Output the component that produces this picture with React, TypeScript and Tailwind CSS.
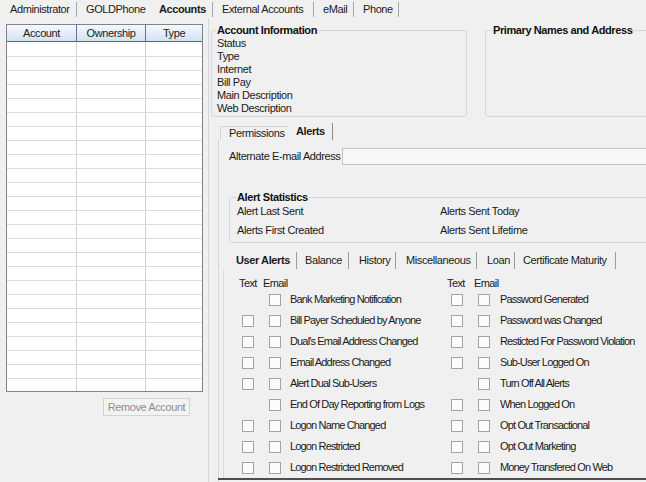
import React from 'react';

type AlertRow = { text: boolean; label: string };

const leftAlerts: AlertRow[] = [
  { text: false, label: 'Bank Marketing Notification' },
  { text: true, label: 'Bill Payer Scheduled by Anyone' },
  { text: true, label: "Dual's Email Address Changed" },
  { text: true, label: 'Email Address Changed' },
  { text: true, label: 'Alert Dual Sub-Users' },
  { text: false, label: 'End Of Day Reporting from Logs' },
  { text: true, label: 'Logon Name Changed' },
  { text: true, label: 'Logon Restricted' },
  { text: true, label: 'Logon Restricted Removed' },
];

const rightAlerts: AlertRow[] = [
  { text: true, label: 'Password Generated' },
  { text: true, label: 'Password was Changed' },
  { text: true, label: 'Resticted For Password Violation' },
  { text: true, label: 'Sub-User Logged On' },
  { text: false, label: 'Turn Off All Alerts' },
  { text: true, label: 'When Logged On' },
  { text: true, label: 'Opt Out Transactional' },
  { text: true, label: 'Opt Out Marketing' },
  { text: true, label: 'Money Transfered On Web' },
];

const Box = () => <span className="block w-[12px] h-[12px] shrink-0 border border-[#a3a3a3] bg-[#fbfbfb]" />;

const AlertColumn: React.FC<{ rows: AlertRow[]; textOffset: string; emailWidth: string; labelGap: string }> = ({ rows, textOffset, emailWidth, labelGap }) => (
  <div className="flex flex-col">
    <div className="flex h-[12px] leading-[12px] tracking-[-0.6px]">
      <span className={textOffset + ' ' + emailWidth}>Text</span>
      <span>Email</span>
    </div>
    {rows.map((r) => (
      <div key={r.label} className="flex items-center h-[21px]">
        {r.text ? <Box /> : <span className="block w-[12px] shrink-0" />}
        <span className="ml-[15px]"><Box /></span>
        <span className={labelGap + ' whitespace-nowrap tracking-[-0.85px]'}>{r.label}</span>
      </div>
    ))}
  </div>
);

const topTabs = [
  { label: 'Administrator', w: 'w-[77px]', pl: 'pl-[10px]', sep: true },
  { label: 'GOLDPhone', w: 'w-[73px]', pl: 'pl-[9px]', sep: false },
  { label: 'Accounts', w: 'w-[63px]', pl: 'pl-[9px]', sep: true, bold: true },
  { label: 'External Accounts', w: 'w-[101px]', pl: 'pl-[9px]', sep: true },
  { label: 'eMail', w: 'w-[40px]', pl: 'pl-[9px]', sep: true },
  { label: 'Phone', w: 'w-[45px]', pl: 'pl-[9px]', sep: true },
];

const alertTabs = [
  { label: 'User Alerts', w: 'w-[69px]', pl: 'pl-[8px]', bold: true },
  { label: 'Balance', w: 'w-[52px]', pl: 'pl-[8px]' },
  { label: 'History', w: 'w-[47px]', pl: 'pl-[10px]' },
  { label: 'Miscellaneous', w: 'w-[81px]', pl: 'pl-[10px]' },
  { label: 'Loan', w: 'w-[38px]', pl: 'pl-[10px]' },
  { label: 'Certificate Maturity', w: 'w-[101px]', pl: 'pl-[8px]' },
];

const accountInfo = ['Status', 'Type', 'Internet', 'Bill Pay', 'Main Description', 'Web Description'];

export default function App() {
  const rows = Array.from({ length: 25 });
  return (
    <div className="w-[646px] h-[482px] overflow-hidden bg-[#f0f0f0] text-[11px] text-[#1b1b1b] font-['Liberation_Sans',Arial,sans-serif] flex flex-col tracking-[-0.4px]">
      {/* top tabs */}
      <div className="flex items-center h-[19px] shrink-0">
        {topTabs.map((t) => (
          <div
            key={t.label}
            className={`${t.w} ${t.pl} h-[15px] flex items-center whitespace-nowrap ${t.sep ? 'border-r border-[#a6a6a6]' : ''} ${t.bold ? 'font-bold' : ''}`}
          >
            {t.label}
          </div>
        ))}
      </div>

      <div className="flex flex-1 min-h-0">
        {/* left panel */}
        <div className="w-[209px] shrink-0 border-r border-[#d6d6d6] pl-[6px] pt-[5px] flex flex-col">
          <div className="w-[197px] h-[368px] border border-[#7d848c] bg-white overflow-hidden">
            <div className="flex h-[17px] border-b border-[#4f6a88] bg-gradient-to-b from-[#f6f9fd] to-[#d4e1f1] text-[#222]">
              <div className="w-[70px] border-r border-[#5b7594] flex items-center justify-center">Account</div>
              <div className="w-[69px] border-r border-[#5b7594] flex items-center justify-center">Ownership</div>
              <div className="flex-1 flex items-center justify-center">Type</div>
            </div>
            {rows.map((_, i) => (
              <div key={i} className={`flex border-b border-[#dcdcdc] ${i === 0 ? 'h-[15px]' : 'h-[14px]'}`}>
                <div className="w-[70px] border-r border-[#d2d2d2]" />
                <div className="w-[69px] border-r border-[#d2d2d2]" />
                <div className="flex-1" />
              </div>
            ))}
          </div>
          <div className="mt-[6px] ml-[97px] w-[87px] h-[18px] border border-[#d3d3d3] bg-[#f3f3f3] text-[#8e8e8e] flex items-center justify-center whitespace-nowrap">
            Remove Account
          </div>
        </div>

        {/* right panel */}
        <div className="flex-1 min-w-0 pt-[5px] flex flex-col">
          <div className="flex pl-[2px] shrink-0">
            <fieldset className="w-[256px] h-[93px] border border-[#d3d8dc] rounded-[3px] px-[5px] shrink-0">
              <legend className="font-bold leading-[13px] text-[#111]">Account Information</legend>
              {accountInfo.map((l) => (
                <div key={l} className="leading-[13px]">{l}</div>
              ))}
            </fieldset>
            <fieldset className="ml-[18px] w-[200px] h-[93px] border border-[#d3d8dc] rounded-[3px] px-[7px] shrink-0">
              <legend className="font-bold leading-[13px] text-[#111]">Primary Names and Address</legend>
            </fieldset>
          </div>

          {/* inner tabs */}
          <div className="ml-[9px] mt-[6px] h-[17px] flex items-end pl-[2px] shrink-0">
            <div className="w-[68px] h-[14px] border-l border-t border-[#d6d6d6] pl-[8px] flex items-center">Permissions</div>
            <div className="w-[45px] h-[17px] border-r border-[#8a8a8a] pl-[8px] flex items-center font-bold">Alerts</div>
          </div>

          <div className="ml-[9px] flex-1 border-l border-[#d4d4d4] flex flex-col min-w-0">
            <div className="mt-[8px] h-[17px] flex items-center pl-[10px]">
              <span className="w-[113px] shrink-0 whitespace-nowrap">Alternate E-mail Address</span>
              <div className="w-[320px] h-[17px] border border-[#c3c3c3] bg-[#f8f8f8] shrink-0" />
            </div>

            <fieldset className="ml-[10px] mt-[26px] w-[440px] h-[52px] border border-[#d3d8dc] rounded-[3px] px-[7px] shrink-0">
              <legend className="font-bold leading-[13px] text-[#111]">Alert Statistics</legend>
              <div className="flex leading-[14px]">
                <span className="w-[203px]">Alert Last Sent</span>
                <span>Alerts Sent Today</span>
              </div>
              <div className="flex leading-[14px] mt-[5px]">
                <span className="w-[203px]">Alerts First Created</span>
                <span>Alerts Sent Lifetime</span>
              </div>
            </fieldset>

            <div className="mt-[8px] h-[19px] flex items-center pl-[9px] shrink-0">
              {alertTabs.map((t) => (
                <div
                  key={t.label}
                  className={`${t.w} ${t.pl} h-[17px] flex items-center whitespace-nowrap border-r border-[#9c9c9c] ${t.bold ? 'font-bold' : ''}`}
                >
                  {t.label}
                </div>
              ))}
            </div>

            <div className="ml-[4px] border-l border-[#dadada] pl-[18px] pt-[7px] flex shrink-0">
              <div className="w-[209px] shrink-0">
                <AlertColumn rows={leftAlerts} textOffset="ml-[-3px]" emailWidth="w-[24px]" labelGap="ml-[9px]" />
              </div>
              <div className="shrink-0">
                <AlertColumn rows={rightAlerts} textOffset="ml-[-4px]" emailWidth="w-[27px]" labelGap="ml-[10px]" />
              </div>
            </div>
            <div className="h-[2px] bg-[#4e4e4e] ml-[-1px] shrink-0" />
          </div>
        </div>
      </div>
    </div>
  );
}
